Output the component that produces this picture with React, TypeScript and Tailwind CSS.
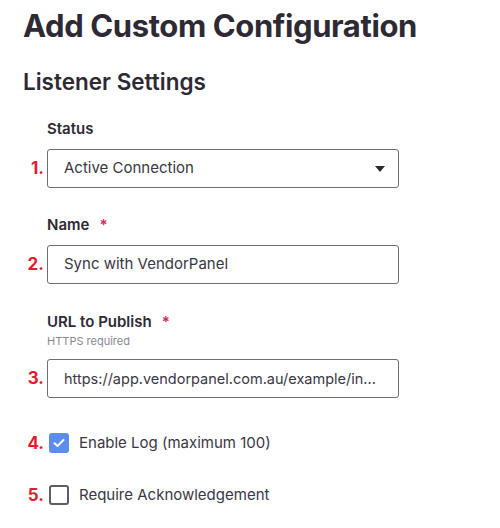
import { FC, ReactNode, useState } from "react";

const Num: FC<{ n: number }> = ({ n }) => (
  <span className="w-[44px] shrink-0 text-right text-[17px] font-bold leading-none text-[#e8192c]">
    {n}.
  </span>
);

const Field: FC<{ label: string; required?: boolean; hint?: string; children: ReactNode }> = ({
  label,
  required,
  hint,
  children,
}) => (
  <div className="flex flex-col">
    <div className="ml-[47px] flex h-[20px] items-center gap-[10px] text-[15px] font-semibold text-[#2e2a35]">
      {label}
      {required && <span className="text-[#d6245a]">*</span>}
    </div>
    {hint && <div className="ml-[47px] mt-[2px] text-[11px] leading-[14px] text-[#8a8795]">{hint}</div>}
    {children}
  </div>
);

const Box: FC<{ n: number; children: ReactNode }> = ({ n, children }) => (
  <div className="flex items-center">
    <Num n={n} />
    <div className="ml-[3px] flex h-[39px] w-[352px] items-center overflow-hidden whitespace-nowrap rounded-[3px] border border-[#6f6d75] bg-white pl-[16px] pr-[12px] text-[15px] text-[#3a3745]">
      {children}
    </div>
  </div>
);

const Check: FC<{ n: number; label: string; checked: boolean; onToggle: () => void }> = ({
  n,
  label,
  checked,
  onToggle,
}) => (
  <div className="flex h-[20px] items-center">
    <Num n={n} />
    <button
      onClick={onToggle}
      className={
        checked
          ? "ml-[5px] flex h-[20px] w-[20px] items-center justify-center rounded-[3px] bg-[#5b8def]"
          : "ml-[5px] flex h-[20px] w-[20px] items-center justify-center rounded-[3px] border-2 border-[#5f5d66] bg-white"
      }
    >
      {checked && (
        <svg width="12" height="10" viewBox="0 0 12 10" fill="none">
          <path d="M1.5 5.2 4.5 8 10.5 2" stroke="white" strokeWidth="2" strokeLinecap="round" strokeLinejoin="round" />
        </svg>
      )}
    </button>
    <span className="ml-[10px] text-[15px] text-[#3a3745]">{label}</span>
  </div>
);

export default function App() {
  const [log, setLog] = useState(true);
  const [ack, setAck] = useState(false);

  return (
    <div className="h-[528px] w-[500px] bg-white font-['Inter',sans-serif]">
      <h1 className="pl-[23px] pt-[6px] text-[31px] font-bold leading-[40px] tracking-[-0.4px] text-[#2e2a35]">
        Add Custom Configuration
      </h1>
      <h2 className="mt-[22px] pl-[23px] text-[22.5px] font-semibold leading-[28px] text-[#2e2a35]">
        Listener Settings
      </h2>

      <div className="mt-[23px] flex flex-col">
        <Field label="Status">
          <div className="mt-[10px]">
            <Box n={1}>
              <span className="flex-1">Active Connection</span>
              <svg width="10" height="6" viewBox="0 0 10 6" className="mr-[1px]">
                <path d="M0 0h10L5 6z" fill="#2e2a35" />
              </svg>
            </Box>
          </div>
        </Field>

        <div className="mt-[27px]">
          <Field label="Name" required>
            <div className="mt-[10px]">
              <Box n={2}>
                <span>Sync with VendorPanel</span>
              </Box>
            </div>
          </Field>
        </div>

        <div className="mt-[28px]">
          <Field label="URL to Publish" required hint="HTTPS required">
            <div className="mt-[11px]">
              <Box n={3}>
                <span className="text-[14.5px]">https://app.vendorpanel.com.au/example/in...</span>
              </Box>
            </div>
          </Field>
        </div>

        <div className="mt-[35px] flex flex-col gap-[32px]">
          <Check n={4} label="Enable Log (maximum 100)" checked={log} onToggle={() => setLog(!log)} />
          <Check n={5} label="Require Acknowledgement" checked={ack} onToggle={() => setAck(!ack)} />
        </div>
      </div>
    </div>
  );
}
